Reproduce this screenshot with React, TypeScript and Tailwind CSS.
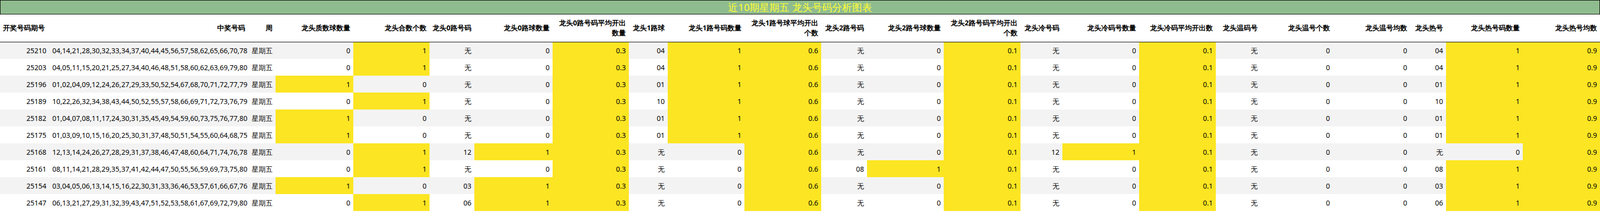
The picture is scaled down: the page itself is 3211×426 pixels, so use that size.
import React from "react";

const widths = ["w-[99px]","w-[399px]","w-[55px]","w-[156px]","w-[153px]","w-[90px]","w-[157px]","w-[153px]","w-[78px]","w-[154px]","w-[154px]","w-[92px]","w-[154px]","w-[154px]","w-[84px]","w-[154px]","w-[154px]","w-[90px]","w-[145px]","w-[155px]","w-[72px]","w-[154px]","w-[155px]"];

const headers: React.ReactNode[] = [
  "开奖号码期号","中奖号码","周","龙头质数球数量","龙头合数个数","龙头0路号码","龙头0路球数量",
  <>龙头0路号码平均开出<br/>数量</>,"龙头1路球","龙头1路号码数量",<>龙头1路号球平均开出<br/>个数</>,
  "龙头2路号码","龙头2路号球数量",<>龙头2路号码平均开出<br/>个数</>,"龙头冷号码","龙头冷码号数量","龙头冷码平均开出数",
  "龙头温码号","龙头温号个数","龙头温号均数","龙头热号","龙头热号码数量","龙头热号均数",
];

type R = [string,string,number,number,string,number,string,number,string,number,string,number,string,number,string,number];
const rows: R[] = [
  ["25210","04,14,21,28,30,32,33,34,37,40,44,45,56,57,58,62,65,66,70,78",0,1,"无",0,"04",1,"无",0,"无",0,"无",0,"04",1],
  ["25203","04,05,11,15,20,21,25,27,34,40,46,48,51,58,60,62,63,69,79,80",0,1,"无",0,"04",1,"无",0,"无",0,"无",0,"04",1],
  ["25196","01,02,04,09,12,24,26,27,29,33,50,52,54,67,68,70,71,72,77,79",1,0,"无",0,"01",1,"无",0,"无",0,"无",0,"01",1],
  ["25189","10,22,26,32,34,38,43,44,50,52,55,57,58,66,69,71,72,73,76,79",0,1,"无",0,"10",1,"无",0,"无",0,"无",0,"10",1],
  ["25182","01,04,07,08,11,17,24,30,31,35,45,49,54,59,60,73,75,76,77,80",1,0,"无",0,"01",1,"无",0,"无",0,"无",0,"01",1],
  ["25175","01,03,09,10,15,16,20,25,30,31,37,48,50,51,54,55,60,64,68,75",1,0,"无",0,"01",1,"无",0,"无",0,"无",0,"01",1],
  ["25168","12,13,14,24,26,27,28,29,31,37,38,46,47,48,60,64,71,74,76,78",0,1,"12",1,"无",0,"无",0,"12",1,"无",0,"无",0],
  ["25161","08,11,14,21,28,29,35,37,41,42,44,47,50,55,56,59,69,73,75,80",0,1,"无",0,"无",0,"08",1,"无",0,"无",0,"08",1],
  ["25154","03,04,05,06,13,14,15,16,22,30,31,33,36,46,53,57,61,66,67,76",1,0,"03",1,"无",0,"无",0,"无",0,"无",0,"03",1],
  ["25147","06,13,21,27,29,31,32,39,43,47,51,52,53,58,61,67,69,72,79,80",0,1,"06",1,"无",0,"无",0,"无",0,"无",0,"06",1],
];

const Y = "bg-[#fce522]";

export default function App() {
  return (
    <div className="w-[3211px] h-[426px] bg-white text-black font-['Liberation_Sans','Noto_Sans_CJK_SC',sans-serif] text-[14px] overflow-hidden">
      <div className="h-[29px] bg-[#8fbc8f] border border-black flex items-center justify-center text-[#ffff33] text-[20px] font-['Liberation_Serif','Noto_Sans_CJK_SC',serif]">
        近10期星期五 龙头号码分析图表
      </div>
      <table className="table-fixed border-collapse w-[3211px]">
        <colgroup>
          {widths.map((w, i) => <col key={i} className={w} />)}
        </colgroup>
        <thead>
          <tr className="h-[55px] border-b border-black">
            {headers.map((h, i) => (
              <th key={i} className={`font-bold leading-[20px] px-[6px] align-middle whitespace-nowrap ${i === 0 ? "text-left" : "text-right"}`}>{h}</th>
            ))}
          </tr>
        </thead>
        <tbody>
          {rows.map((r, ri) => {
            const stripe = ri % 2 === 0 ? "bg-[#f3f3f3]" : "bg-white";
            const cells: [React.ReactNode, boolean][] = [
              [r[0], false],[r[1], false],["星期五", false],
              [r[2], r[2] === 1],[r[3], r[3] === 1],
              [r[4], false],[r[5], r[5] === 1],["0.3", true],
              [r[6], false],[r[7], r[7] === 1],["0.6", true],
              [r[8], false],[r[9], r[9] === 1],["0.1", true],
              [r[10], false],[r[11], r[11] === 1],["0.1", true],
              [r[12], false],[r[13], false],["0", false],
              [r[14], false],[r[15], r[15] === 1],["0.9", true],
            ];
            return (
              <tr key={ri} className="h-[34px]">
                {cells.map(([v, y], ci) => (
                  <td key={ci} className={`px-[6px] text-right whitespace-nowrap ${y ? Y : stripe}`}>{v}</td>
                ))}
              </tr>
            );
          })}
        </tbody>
      </table>
    </div>
  );
}
